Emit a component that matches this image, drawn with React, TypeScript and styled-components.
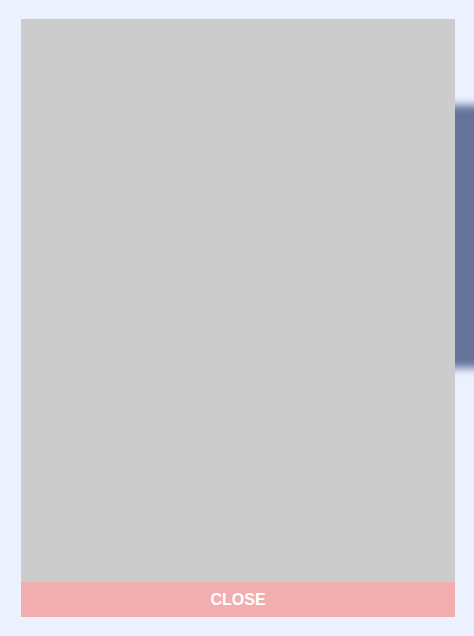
import styled, { createGlobalStyle } from "styled-components";

const GlobalStyle = createGlobalStyle`
  html, body {
    margin: 0;
    padding: 0;
    background: #ebf1ff;
  }
  * { box-sizing: border-box; }
`;

const Stage = styled.div`
  position: relative;
  width: 474px;
  height: 636px;
  overflow: hidden;
  background: #ebf1ff;
  font-family: "Liberation Sans", Arial, sans-serif;
`;

const BackdropCard = styled.div`
  position: absolute;
  top: 105px;
  left: 180px;
  width: 320px;
  height: 263px;
  background: #64739a;
  filter: blur(4px);
`;

const Modal = styled.div`
  position: absolute;
  top: 19px;
  left: 21px;
  width: 434px;
  height: 598px;
  display: flex;
  flex-direction: column;
`;

const ModalBody = styled.div`
  flex: 1;
  background: #cccccc;
`;

const CloseButton = styled.button`
  height: 35px;
  border: none;
  margin: 0;
  padding: 0;
  background: #f2aeae;
  color: #ffffff;
  font-family: "Liberation Sans", Arial, sans-serif;
  font-size: 16px;
  font-weight: 700;
  text-transform: uppercase;
  cursor: pointer;
`;

export default function App() {
  return (
    <>
      <GlobalStyle />
      <Stage>
        <BackdropCard />
        <Modal>
          <ModalBody />
          <CloseButton>Close</CloseButton>
        </Modal>
      </Stage>
    </>
  );
}
